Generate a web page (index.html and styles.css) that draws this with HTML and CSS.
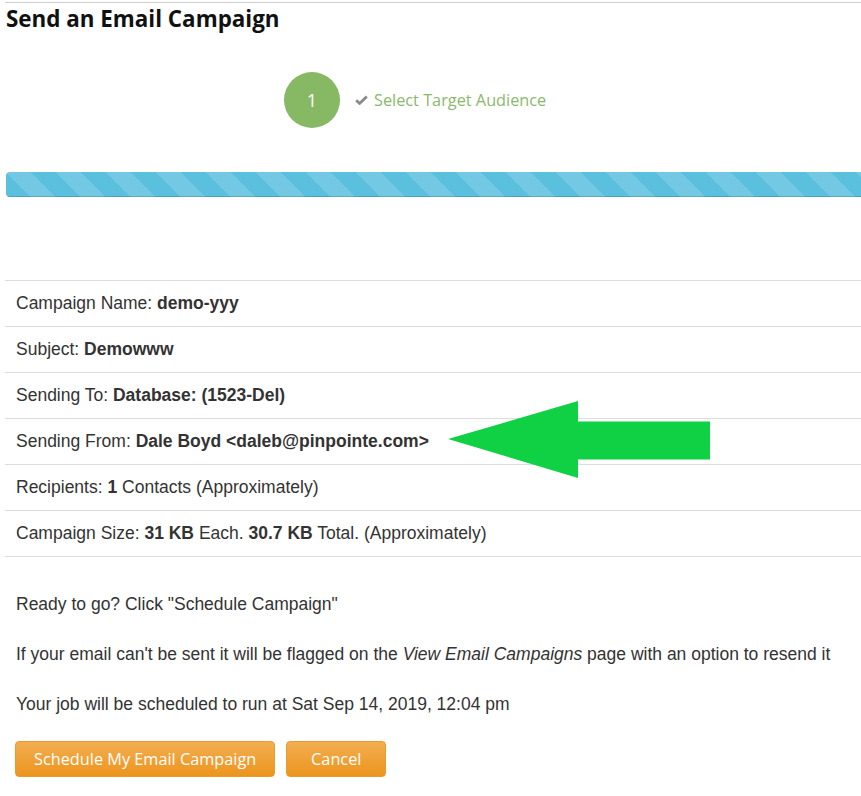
FILE: index.html
```html
<!DOCTYPE html>
<html>
<head>
<meta charset="utf-8">
<link rel="stylesheet" href="styles.css">
</head>
<body>
<div class="page">
  <div class="topline"></div>
  <h1 class="title">Send an Email Campaign</h1>
  <div class="steps">
    <div class="step-circle">1</div>
    <div class="step-label">
      <svg class="check" width="13" height="10" viewBox="0 0 13 10"><path d="M1.2 5.2 L4.6 8.4 L11.8 1.4" fill="none" stroke="#8a8a8a" stroke-width="2.8" stroke-linejoin="miter"/></svg>
      <span>Select Target Audience</span>
    </div>
  </div>
  <div class="progress"><div class="progress-bar"></div></div>
  <div class="summary">
    <div class="row">Campaign Name: <b>demo-yyy</b></div>
    <div class="row">Subject: <b>Demowww</b></div>
    <div class="row">Sending To: <b>Database: (1523-Del)</b></div>
    <div class="row">Sending From: <b>Dale Boyd &lt;daleb@pinpointe.com&gt;</b></div>
    <div class="row">Recipients: <b>1</b> Contacts (Approximately)</div>
    <div class="row">Campaign Size: <b>31 KB</b> Each. <b>30.7 KB</b> Total. (Approximately)</div>
  </div>
  <div class="notes">
    <p>Ready to go? Click "Schedule Campaign"</p>
    <p>If your email can't be sent it will be flagged on the <i>View Email Campaigns</i> page with an option to resend it</p>
    <p>Your job will be scheduled to run at Sat Sep 14, 2019, 12:04 pm</p>
  </div>
  <div class="actions">
    <button class="btn">Schedule My Email Campaign</button>
    <button class="btn btn-cancel">Cancel</button>
  </div>
</div>
<svg class="arrow" width="861" height="796" viewBox="0 0 861 796">
  <polygon points="448,439 578,401 578,421.5 710,421.5 710,459.5 578,459.5 578,478" fill="#10d044"/>
</svg>
</body>
</html>
```

FILE: styles.css
```css
html, body {
  margin: 0;
  padding: 0;
  background: #fff;
}
body {
  width: 861px;
  height: 796px;
  overflow: hidden;
  position: relative;
  font-family: "Liberation Sans", Arial, sans-serif;
  color: #333;
}
.page {
  padding-left: 5px;
}
.topline {
  height: 0;
  border-top: 1px solid #cfcfcf;
  margin-top: 2px;
}
.title {
  font-family: "Open Sans", sans-serif;
  font-weight: 700;
  font-size: 22.4px;
  line-height: 30px;
  margin: 1px 0 0 1px;
  color: #111;
}
.steps {
  display: flex;
  align-items: center;
  margin: 38px 0 0 279px;
}
.step-circle {
  width: 56px;
  height: 56px;
  border-radius: 50%;
  background: #87b864;
  color: #fff;
  font-family: "Open Sans", sans-serif;
  font-size: 18px;
  display: flex;
  align-items: center;
  justify-content: center;
}
.step-label {
  display: flex;
  align-items: center;
  margin-left: 15px;
  font-family: "Open Sans", sans-serif;
  font-size: 16.3px;
  color: #8bb86d;
}
.check {
  margin-right: 6px;
}
.progress {
  margin-top: 44px;
  margin-left: 1px;
  height: 25px;
  border-radius: 4px 0 0 4px;
  overflow: hidden;
  background: #f5f5f5;
}
.progress-bar {
  height: 100%;
  width: 100%;
  background-color: #5bc0de;
  background-image: linear-gradient(45deg, rgba(255,255,255,.15) 25%, transparent 25%, transparent 50%, rgba(255,255,255,.15) 50%, rgba(255,255,255,.15) 75%, transparent 75%, transparent);
  background-size: 50px 50px;
  box-shadow: inset 0 -1px 0 rgba(0,0,0,.15);
}
.summary {
  margin-top: 83px;
  border-bottom: 1px solid #ddd;
}
.row {
  border-top: 1px solid #ddd;
  padding: 11px 11px;
  font-size: 17.5px;
  line-height: 23px;
}
.row b {
  font-weight: 700;
}
.notes {
  padding-top: 36px;
  padding-left: 11px;
  font-size: 17.5px;
  line-height: 23px;
}
.notes p {
  margin: 0 0 27px;
}
.notes p:last-child {
  margin-bottom: 0;
}
.actions {
  display: flex;
  gap: 11px;
  margin-top: 25px;
  padding-left: 10px;
}
.btn {
  height: 36px;
  padding: 0 18px;
  border: 1px solid #eb9a2c;
  border-radius: 4px;
  background: linear-gradient(to bottom, #f2ae50 0%, #ec951d 100%);
  color: #fff;
  font-family: "Open Sans", sans-serif;
  font-size: 16.3px;
  cursor: pointer;
}
.btn-cancel {
  min-width: 100px;
}
.arrow {
  position: absolute;
  left: 0;
  top: 0;
  pointer-events: none;
}
```
